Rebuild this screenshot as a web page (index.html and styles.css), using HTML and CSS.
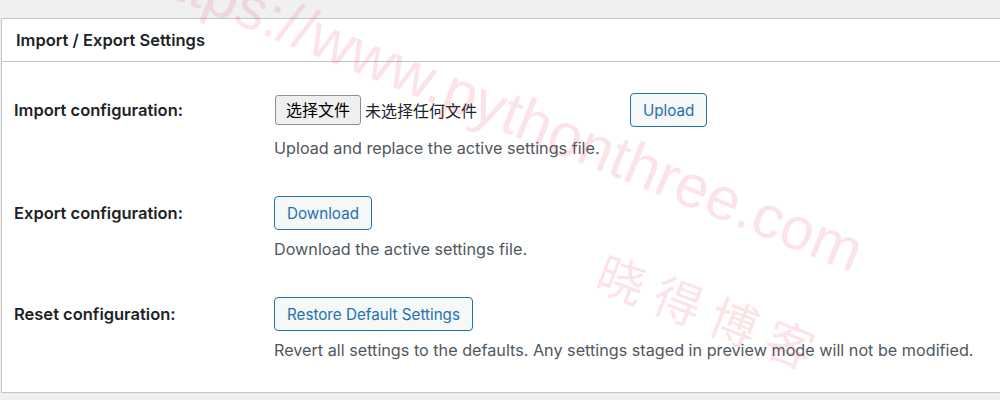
FILE: index.html
```html
<!DOCTYPE html>
<html lang="zh-CN">
<head>
  <meta charset="UTF-8">
  <meta name="viewport" content="width=device-width, initial-scale=1.0">
  <title>Import / Export Settings</title>
  <link rel="stylesheet" href="styles.css">
</head>
<body>
  <div class="postbox">
    <h2 class="postbox-title">Import / Export Settings</h2>
    <div class="postbox-inside">
      <div class="setting-row">
        <div class="setting-label">Import configuration:</div>
        <div class="setting-field">
          <div class="field-line">
            <div class="file-picker">
              <label class="file-button">选择文件<input type="file" class="file-input"></label>
              <span class="file-status">未选择任何文件</span>
            </div>
            <button class="button">Upload</button>
          </div>
          <p class="description first">Upload and replace the active settings file.</p>
        </div>
      </div>
      <div class="setting-row">
        <div class="setting-label">Export configuration:</div>
        <div class="setting-field">
          <div class="field-line"><button class="button">Download</button></div>
          <p class="description">Download the active settings file.</p>
        </div>
      </div>
      <div class="setting-row">
        <div class="setting-label">Reset configuration:</div>
        <div class="setting-field">
          <div class="field-line"><button class="button">Restore Default Settings</button></div>
          <p class="description">Revert all settings to the defaults. Any settings staged in preview mode will not be modified.</p>
        </div>
      </div>
    </div>
  </div>
  <!-- watermark over the screenshot -->
  <div class="watermark watermark-url">https://www.pythonthree.com</div>
  <div class="watermark watermark-name">晓得博客</div>
</body>
</html>
```

FILE: styles.css
```css
html,body{ margin:0; padding:0; }
body{
  height:400px; overflow:hidden; position:relative;
  background:#f0f0f1; padding:18px 0 0 1px; box-sizing:border-box;
  font-family:Inter, "Noto Sans CJK SC", sans-serif; font-size:16px; color:#1d2327;
}
.postbox{ background:#fff; border:1px solid #c3c4c7; border-right:none; }
.postbox-title{
  margin:0; height:42px; line-height:42px; padding:0 14px;
  font-size:16.5px; font-weight:600; border-bottom:1px solid #c3c4c7;
}
.postbox-inside{
  padding:31px 0 30px 12px;
  display:flex; flex-direction:column; gap:36px;
}
.setting-row{ display:grid; grid-template-columns:260px 1fr; }
.setting-label{ line-height:34px; font-weight:600; font-size:16.5px; }
.field-line{ display:flex; align-items:center; height:34px; }
.file-picker{ width:356px; display:flex; align-items:center; gap:4px; }
.file-button{
  height:30px; line-height:28px; box-sizing:border-box; margin-left:1px;
  padding:0 10px; border:1px solid #8c8f94; border-radius:3px; background:#efefef; color:#000;
}
.file-input{ display:none; }
.file-status{ color:#1d2327; }
.button{
  height:34px; padding:0 12px; box-sizing:border-box;
  font-family:inherit; font-size:15.2px; color:#2271b1;
  background:#f6f7f7; border:1px solid #2271b1; border-radius:4px;
}
.description{ margin:7px 0 0; line-height:24px; color:#50575e; font-size:16.2px; }
.description.first{ margin-top:9px; }
.watermark{
  position:absolute; line-height:1; white-space:nowrap; pointer-events:none;
  color:rgba(235,40,70,0.13); transform-origin:0 0;
}
.watermark-url{
  left:157px; top:-62px; transform:rotate(22deg);
  font-family:"Liberation Sans", sans-serif; font-size:60px;
}
.watermark-name{
  left:609px; top:246px; transform:rotate(21deg);
  font-family:"Noto Sans CJK SC", sans-serif; font-size:48px; letter-spacing:12px;
}
```
